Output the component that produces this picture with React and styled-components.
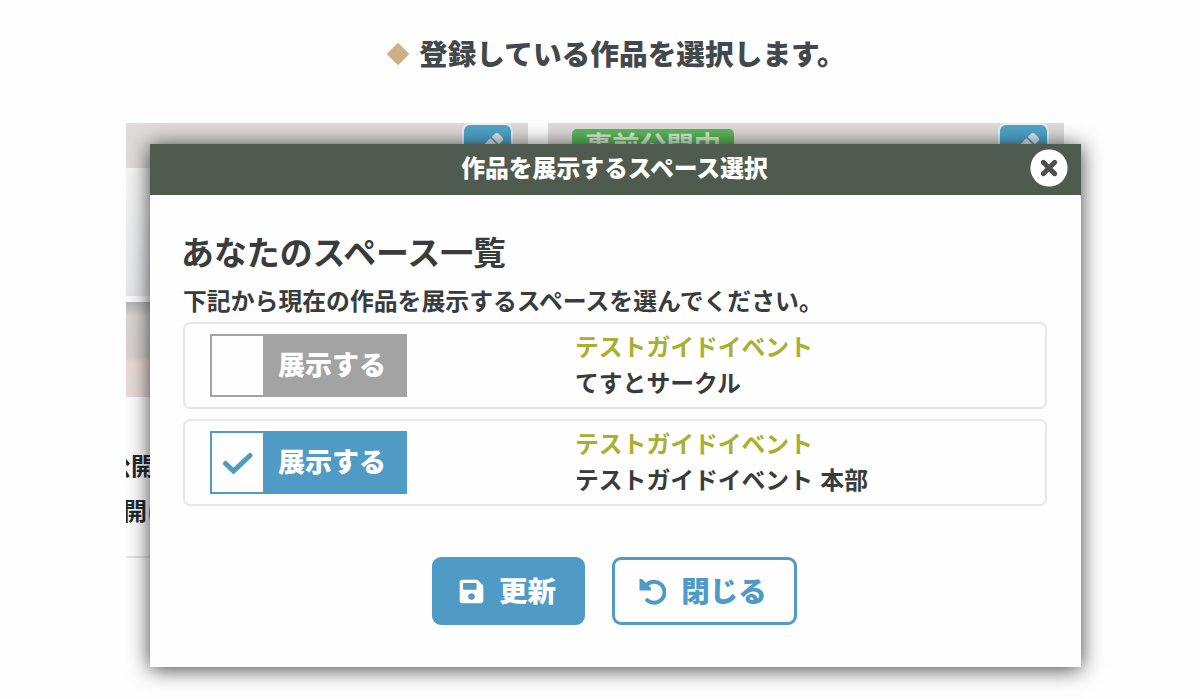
import React, { useState } from 'react';
import styled, { createGlobalStyle } from 'styled-components';
import { FaPen, FaSave } from 'react-icons/fa';

const GlobalStyle = createGlobalStyle`
  * {
    box-sizing: border-box;
  }

  body {
    margin: 0;
    background: #fefefe;
    color: #393c3d;
    font-family: 'Noto Sans CJK JP', sans-serif;
    font-weight: 700;
  }

  h1, h2, h3, p {
    margin: 0;
    font-weight: 700;
  }

  button {
    font: inherit;
    cursor: pointer;
  }
`;

const Page = styled.div`
  height: 699px;
  overflow: hidden;
`;

const Step = styled.h1`
  display: flex;
  align-items: center;
  height: 123px;
  padding: 0 0 15px 390px;
  gap: 13px;
  color: #42484c;
  font-size: 28.7px;
  font-weight: 900;
  line-height: 40px;
  white-space: nowrap;
`;

const StepText = styled.span`
  padding-bottom: 2px;
`;

const Diamond = styled.span`
  width: 16px;
  height: 16px;
  background: #ceb086;
  transform: rotate(45deg);
`;

const Screen = styled.div`
  position: relative;
  width: 1000px;
  height: 576px;
  margin-left: 126px;
  overflow: hidden;
`;

const Backdrop = styled.div`
  display: flex;
  gap: 20px;
  height: 100%;
`;

const Card = styled.div`
  display: flex;
  flex-direction: column;
  width: ${({ $width }) => $width}px;
`;

const CardHead = styled.div`
  display: flex;
  justify-content: space-between;
  height: 45px;
  padding: 0 15px 0 24px;
  background: #dedbda;
`;

const Badge = styled.span`
  height: 30px;
  margin-top: 6px;
  padding: 0 13px;
  border-radius: 5px;
  background: #5bb85a;
  color: #dcebd8;
  font-size: 27.2px;
  line-height: 31px;
`;

const EditButton = styled.span`
  display: flex;
  align-items: center;
  justify-content: center;
  width: 51px;
  height: 48px;
  margin-left: auto;
  padding-left: 2px;
  border: 2px solid #e9f1f5;
  border-radius: 8px;
  background: #4fa5ca;
  color: #e3e8ee;
  font-size: 29px;
`;

const Preview = styled.div`
  height: 134px;
  border-bottom: 6px solid #fafafa;
  background: linear-gradient(#f4f4f3, #e5e6e9);
`;

const Photo = styled.div`
  height: 95px;
  background: linear-gradient(#b4b2b2 0, #d8d4d2 15px, #d6d1cf 55px, #ead8d5 60px, #e4dad7 100%);
`;

const CardNotes = styled.div`
  height: 161px;
  padding-top: 45px;
  border-bottom: 2px solid #e3e3e3;
  color: #25282a;
  font-size: 24px;
  line-height: 45px;
`;

const NoteLine = styled.p`
  text-indent: ${({ $shift }) => $shift}px;
  white-space: nowrap;
`;

const Dialog = styled.section`
  position: absolute;
  top: 21px;
  left: 24px;
  display: flex;
  flex-direction: column;
  width: 931px;
  height: 523px;
  background: #fefefe;
  box-shadow: 0 2px 20px rgba(0, 0, 0, 0.75);
`;

const DialogHeader = styled.header`
  display: grid;
  grid-template-columns: 1fr auto 1fr;
  align-items: center;
  height: 51px;
  padding-right: 13px;
  padding-left: 11px;
  background: #4f5b4e;
  color: #fff;
`;

const DialogTitle = styled.h2`
  grid-column: 2;
  padding-bottom: 6px;
  font-size: 23.8px;
  font-weight: 900;
  line-height: 32px;
`;

const CloseButton = styled.button`
  display: flex;
  justify-self: end;
  padding: 0 0 3px;
  border: 0;
  background: none;
`;

const DialogBody = styled.div`
  padding: 34px 34px 0 33px;
`;

const ListTitle = styled.h3`
  margin-left: -2px;
  font-size: 32.9px;
  line-height: 44px;
`;

const Lead = styled.p`
  margin-top: 10px;
  font-size: 23.85px;
  line-height: 34px;
  white-space: nowrap;
`;

const SpaceList = styled.div`
  display: grid;
  gap: 10px;
  margin-top: 5px;
`;

const SpaceRow = styled.div`
  display: grid;
  grid-template-columns: 365px 1fr;
  align-items: start;
  height: 87px;
  padding: 10px 0 0 25px;
  border: 2px solid #e6e7e7;
  border-radius: 7px;
`;

const Toggle = styled.button`
  display: flex;
  width: 197px;
  height: 63px;
  padding: 0;
  border: 2px solid ${({ $on }) => ($on ? '#4f9bc5' : '#a3a3a3')};
  background: ${({ $on }) => ($on ? '#4f9bc5' : '#a3a3a3')};
  color: #fff;
  font-size: 27px;
  font-weight: 900;
  line-height: 55px;
`;

const CheckBox = styled.span`
  display: flex;
  align-items: center;
  justify-content: center;
  width: 51px;
  height: 59px;
  margin-right: 15px;
  padding-top: 3px;
  background: #fefefe;
  color: #4f9bc5;
`;

const SpaceInfo = styled.div`
  margin-top: -6px;
  font-size: 23.8px;
  line-height: 36px;
  word-spacing: 2px;
`;

const EventName = styled.p`
  color: #a9b02f;
`;

const Actions = styled.div`
  display: flex;
  justify-content: center;
  gap: 27px;
  margin-top: 51px;
  padding-right: 2px;
`;

const ActionButton = styled.button`
  display: flex;
  align-items: center;
  justify-content: center;
  gap: ${({ $primary }) => ($primary ? 14 : 15)}px;
  width: ${({ $width }) => $width}px;
  height: 68px;
  padding: 0 2px 0 0;
  border: 3px solid #4f9bc5;
  border-radius: 9px;
  background: ${({ $primary }) => ($primary ? '#4f9bc5' : '#fefefe')};
  color: ${({ $primary }) => ($primary ? '#fff' : '#4f9bc5')};
  font-size: 28.5px;
  font-weight: 900;
  line-height: 40px;
`;

const ActionIcon = styled.span`
  display: flex;
  font-size: 27px;
`;

const ActionLabel = styled.span`
  padding-bottom: 3px;
`;

const spaces = [
  { id: 1, event: 'テストガイドイベント', name: 'てすとサークル' },
  { id: 2, event: 'テストガイドイベント', name: 'テストガイドイベント 本部' },
];

function CheckIcon() {
  return (
    <svg width="32" height="24" viewBox="0 0 32 24" fill="none" stroke="currentColor" strokeWidth="5" strokeLinecap="round">
      <path d="M3.5 11.5 11.5 19 28 3.5" />
    </svg>
  );
}

function CloseIcon() {
  return (
    <svg width="38" height="38" viewBox="0 0 38 38">
      <circle cx="19" cy="19" r="18.6" fill="#fff" />
      <path d="m13.3 13.3 11.4 11.4m0-11.4L13.3 24.7" stroke="#4b504b" strokeWidth="5" strokeLinecap="round" />
    </svg>
  );
}

function UndoIcon() {
  return (
    <svg width="27" height="27" viewBox="0 0 27 27">
      <path d="M7 7.5A10.5 10.5 0 1 1 8.2 22.2" fill="none" stroke="currentColor" strokeWidth="4" strokeLinecap="round" />
      <path d="M.5 1H3l9 9v2.5H.5z" fill="currentColor" />
    </svg>
  );
}

function SpaceItem({ space, selected, onToggle }) {
  return (
    <SpaceRow>
      <Toggle type="button" $on={selected} onClick={onToggle}>
        <CheckBox>{selected && <CheckIcon />}</CheckBox>
        展示する
      </Toggle>
      <SpaceInfo>
        <EventName>{space.event}</EventName>
        <p>{space.name}</p>
      </SpaceInfo>
    </SpaceRow>
  );
}

export default function App() {
  const [selected, setSelected] = useState([2]);

  const toggle = (id) => {
    setSelected((ids) => (ids.includes(id) ? ids.filter((i) => i !== id) : [...ids, id]));
  };

  return (
    <Page>
      <GlobalStyle />
      <Step>
        <Diamond />
        <StepText>登録している作品を選択します。</StepText>
      </Step>
      <Screen>
        <Backdrop>
          <Card $width={402}>
            <CardHead>
              <EditButton><FaPen /></EditButton>
            </CardHead>
            <Preview />
            <Photo />
            <CardNotes>
              <NoteLine $shift={-19}>公開</NoteLine>
              <NoteLine $shift={-3}>開に</NoteLine>
            </CardNotes>
          </Card>
          <Card $width={516}>
            <CardHead>
              <Badge>事前公開中</Badge>
              <EditButton><FaPen /></EditButton>
            </CardHead>
          </Card>
        </Backdrop>
        <Dialog>
          <DialogHeader>
            <DialogTitle>作品を展示するスペース選択</DialogTitle>
            <CloseButton type="button" aria-label="閉じる"><CloseIcon /></CloseButton>
          </DialogHeader>
          <DialogBody>
            <ListTitle>あなたのスペース一覧</ListTitle>
            <Lead>下記から現在の作品を展示するスペースを選んでください。</Lead>
            <SpaceList>
              {spaces.map((space) => (
                <SpaceItem
                  key={space.id}
                  space={space}
                  selected={selected.includes(space.id)}
                  onToggle={() => toggle(space.id)}
                />
              ))}
            </SpaceList>
            <Actions>
              <ActionButton type="button" $primary $width={153}>
                <ActionIcon><FaSave /></ActionIcon>
                <ActionLabel>更新</ActionLabel>
              </ActionButton>
              <ActionButton type="button" $width={185}>
                <ActionIcon><UndoIcon /></ActionIcon>
                <ActionLabel>閉じる</ActionLabel>
              </ActionButton>
            </Actions>
          </DialogBody>
        </Dialog>
      </Screen>
    </Page>
  );
}
